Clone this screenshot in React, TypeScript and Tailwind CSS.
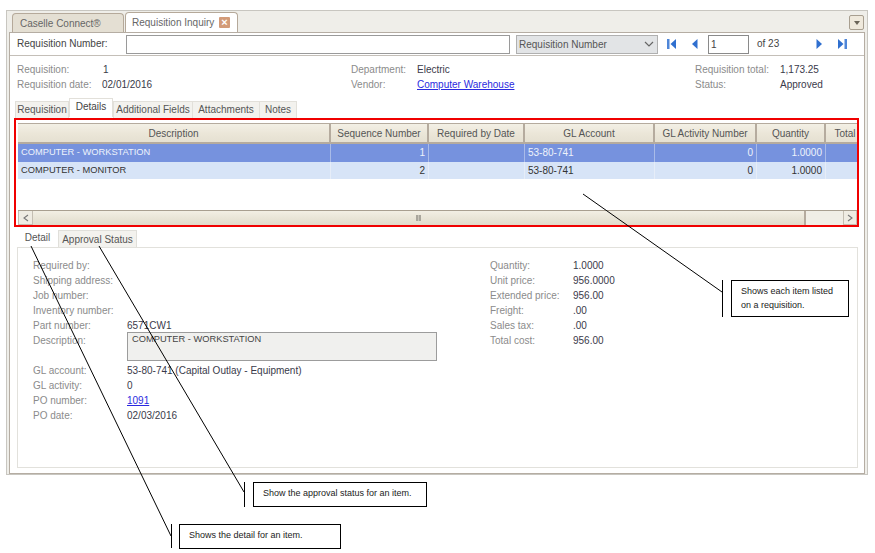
import React from 'react';

const columns = [
    { name: 'Description', w: 'w-[313px]' },
    { name: 'Sequence Number', w: 'w-[98px]' },
    { name: 'Required by Date', w: 'w-[96px]' },
    { name: 'GL Account', w: 'w-[130px]' },
    { name: 'GL Activity Number', w: 'w-[102px]' },
    { name: 'Quantity', w: 'w-[69px]' },
    { name: 'Total', w: 'w-[40px]' },
];

const rows = [
    { cells: ['COMPUTER - WORKSTATION', '1', '', '53-80-741', '0', '1.0000', ''], rowClass: 'bg-[#7692de] text-[#eef2fb]', h: 'h-[18px]', line: 'border-[#a9bbe8]' },
    { cells: ['COMPUTER - MONITOR', '2', '', '53-80-741', '0', '1.0000', ''], rowClass: 'bg-[#d7e4f7] text-[#333]', h: 'h-[17px]', line: 'border-[#e6edf8]' },
];

const rightAligned = [1, 4, 5];

const detailLeft: [string, React.ReactNode][] = [
    ['Required by:', ''],
    ['Shipping address:', ''],
    ['Job number:', ''],
    ['Inventory number:', ''],
    ['Part number:', '6571CW1'],
];

const detailLeftBottom: [string, React.ReactNode][] = [
    ['GL account:', '53-80-741 (Capital Outlay - Equipment)'],
    ['GL activity:', '0'],
    ['PO number:', <a className="text-[#2a2ae0] underline">1091</a>],
    ['PO date:', '02/03/2016'],
];

const detailRight = [
    ['Quantity:', '1.0000'],
    ['Unit price:', '956.0000'],
    ['Extended price:', '956.00'],
    ['Freight:', '.00'],
    ['Sales tax:', '.00'],
    ['Total cost:', '956.00'],
];

function NavIcon({ kind }: { kind: 'first' | 'prev' | 'next' | 'last' }) {
    return (
        <svg width="12" height="12" viewBox="0 0 12 12">
            {kind === 'first' && <rect x="1" y="1" width="2.5" height="10" fill="#4f86d8" />}
            {kind === 'last' && <rect x="8.5" y="1" width="2.5" height="10" fill="#4f86d8" />}
            {(kind === 'first' || kind === 'prev') && (
                <path d={kind === 'first' ? 'M10 1 L4.5 6 L10 11 Z' : 'M8.5 1 L3 6 L8.5 11 Z'} fill="#2f6fcf" />
            )}
            {(kind === 'next' || kind === 'last') && (
                <path d={kind === 'last' ? 'M2 1 L7.5 6 L2 11 Z' : 'M3.5 1 L9 6 L3.5 11 Z'} fill="#2f6fcf" />
            )}
        </svg>
    );
}

function Row({ label, value }: { label: string; value: React.ReactNode }) {
    return (
        <>
            <div className="h-[15px] leading-[15px] text-[#8b8b8b]">{label}</div>
            <div className="h-[15px] leading-[15px] text-[#3a3a4a]">{value}</div>
        </>
    );
}

export default function App() {
    return (
        <div className="relative h-[553px] w-[875px] overflow-hidden bg-white pl-[6px] pt-[10px] font-['Liberation_Sans',sans-serif] text-[10px] text-[#444]">
            {/* App frame */}
            <div className="flex h-[465px] w-[862px] flex-col border border-[#c8c6c0] bg-[#efeee9]">
                {/* Top tabs */}
                <div className="flex h-[21px] items-end pl-[5px] pr-[3px]">
                    <div className="flex h-[19px] w-[112px] items-center rounded-t-[4px] border border-b-0 border-[#b5a99a] bg-[#e4dfd3] pl-[7px] text-[#666]">
                        Caselle Connect®
                    </div>
                    <div className="ml-[1px] flex h-[20px] w-[113px] items-center whitespace-nowrap rounded-t-[4px] border border-b-0 border-[#b5a99a] bg-white pl-[6px] text-[#666]">
                        Requisition Inquiry
                        <span className="ml-auto mr-[7px] flex h-[11px] w-[11px] items-center justify-center rounded-[1px] bg-[#d39b78] text-[11px] leading-none font-bold text-white">×</span>
                    </div>
                    <div className="mb-[2px] ml-auto flex h-[15px] w-[15px] items-center justify-center rounded-[2px] border border-[#a89f90] bg-[#efe9dc]">
                        <div className="h-0 w-0 border-x-[3.5px] border-t-[4px] border-x-transparent border-t-[#6a6458]" />
                    </div>
                </div>

                {/* Main panel */}
                <div className="mx-[2px] flex min-h-0 flex-1 flex-col border border-[#b5ada3] bg-white">
                    {/* Search bar */}
                    <div className="flex h-[23px] shrink-0 items-center border-b border-[#c4bfb8] pl-[7px]">
                        <div className="w-[109px] pb-[1px] text-[#444]">Requisition Number:</div>
                        <div className="h-[19px] w-[384px] border border-[#9a9a9a] bg-white" />
                        <div className="ml-[6px] flex h-[19px] w-[142px] items-center justify-between border border-[#b0b0b0] bg-[#e2e4e6] pl-[2px] pr-[3px] text-[#555]">
                            Requisition Number
                            <svg width="10" height="6" viewBox="0 0 10 6">
                                <path d="M1 1 L5 5 L9 1" fill="none" stroke="#666" strokeWidth="1.2" />
                            </svg>
                        </div>
                        <div className="ml-[8px] flex w-[12px] justify-center"><NavIcon kind="first" /></div>
                        <div className="ml-[11px] flex w-[12px] justify-center"><NavIcon kind="prev" /></div>
                        <div className="ml-[7px] flex h-[19px] w-[41px] items-center border border-[#8a8a8a] pl-[2px]">1</div>
                        <div className="ml-[8px] w-[56px] pb-[1px]">of 23</div>
                        <NavIcon kind="next" />
                        <div className="ml-[11px]"><NavIcon kind="last" /></div>
                    </div>

                    {/* Summary */}
                    <div className="flex h-[43px] shrink-0 pl-[7px] pt-[6px]">
                        <div className="grid h-[30px] w-[334px] grid-cols-[85px_1fr]">
                            <Row label="Requisition:" value={<span className="pl-[1px]">1</span>} />
                            <Row label="Requisition date:" value="02/01/2016" />
                        </div>
                        <div className="grid h-[30px] w-[344px] grid-cols-[66px_1fr]">
                            <Row label="Department:" value="Electric" />
                            <Row label="Vendor:" value={<a className="text-[#2a2ae0] underline">Computer Warehouse</a>} />
                        </div>
                        <div className="grid h-[30px] grid-cols-[85px_1fr]">
                            <Row label="Requisition total:" value="1,173.25" />
                            <Row label="Status:" value="Approved" />
                        </div>
                    </div>

                    {/* Record tabs */}
                    <div className="flex h-[19px] shrink-0 items-end whitespace-nowrap pl-[5px] text-[#555]">
                        <div className="flex h-[17px] w-[54px] items-center justify-center border-x border-t border-[#e2e0da] bg-[#f3f2ee] pb-[1px]">Requisition</div>
                        <div className="mb-[1px] flex h-[19px] w-[44px] items-center justify-center border-x border-t border-[#e2e0da] bg-white pb-[3px] text-[#444]">Details</div>
                        <div className="flex h-[17px] w-[80px] items-center justify-center border-x border-t border-[#e2e0da] bg-[#f3f2ee] pb-[1px]">Additional Fields</div>
                        <div className="flex h-[17px] w-[67px] items-center justify-center border-r border-t border-[#e2e0da] bg-[#f3f2ee] pb-[1px]">Attachments</div>
                        <div className="flex h-[17px] w-[37px] items-center justify-center border-r border-t border-[#e2e0da] bg-[#f3f2ee] pb-[1px]">Notes</div>
                    </div>

                    {/* Highlighted grid */}
                    <div className="ml-[4px] h-[109px] w-[845px] shrink-0 overflow-hidden border-2 border-[#f00000] bg-white pl-[2px] pt-[3px]">
                        <div className="flex h-[21px] w-[1000px] bg-gradient-to-b from-[#f4f1e7] via-[#ebe6d8] to-[#e4dfd0]">
                            {columns.map((c) => (
                                <div key={c.name} className={`flex ${c.w} shrink-0 items-center justify-center border-b-2 border-r-2 border-t border-[#b5ab9e] text-[#555]`}>
                                    {c.name}
                                </div>
                            ))}
                        </div>
                        {rows.map((r) => (
                            <div key={r.cells[0]} className={`flex w-[1000px] ${r.h} ${r.rowClass}`}>
                                {r.cells.map((cell, i) => (
                                    <div
                                        key={i}
                                        className={`${columns[i].w} shrink-0 border-r ${r.line} px-[3px] leading-[17px] ${i === 0 ? 'text-[9.3px]' : ''} ${rightAligned.includes(i) ? 'text-right' : 'text-left'}`}
                                    >
                                        {cell}
                                    </div>
                                ))}
                            </div>
                        ))}
                        <div className="h-[31px]" />
                        {/* Scrollbar */}
                        <div className="flex h-[15px] w-[839px] items-stretch border-t border-[#a89f90] bg-[#f0eee6]">
                            <div className="flex w-[15px] items-center justify-center border border-t-0 border-[#c4beb2] bg-[#efece3]">
                                <svg width="6" height="8" viewBox="0 0 6 8"><path d="M5 1 L1 4 L5 7" fill="none" stroke="#777" strokeWidth="1.1" /></svg>
                            </div>
                            <div className="flex w-[773px] items-center justify-center border-r-2 border-[#b5ab9e] bg-gradient-to-b from-[#f2efe4] to-[#e0dbcb]">
                                <div className="h-[6px] w-[5px] border-x-2 border-[#a9a69c] bg-[#c8c5ba]" />
                            </div>
                            <div className="flex-1" />
                            <div className="flex w-[14px] items-center justify-center border border-t-0 border-[#c4beb2] bg-[#efece3]">
                                <svg width="6" height="8" viewBox="0 0 6 8"><path d="M1 1 L5 4 L1 7" fill="none" stroke="#777" strokeWidth="1.1" /></svg>
                            </div>
                        </div>
                    </div>

                    {/* Lower tabs */}
                    <div className="ml-[7px] flex h-[20px] shrink-0 items-end whitespace-nowrap">
                        <div className="flex h-[20px] w-[41px] items-center justify-center bg-white pt-[1px] text-[#555]">Detail</div>
                        <div className="flex h-[17px] w-[79px] items-center justify-center border-x border-t border-[#e0dfda] bg-[#f3f2ee] text-[#555]">Approval Status</div>
                    </div>

                    {/* Detail panel */}
                    <div className="mb-[5px] ml-[7px] flex min-h-0 w-[841px] flex-1 border border-[#e2e1dc] pl-[15px] pt-[10px]">
                        <div className="w-[457px] shrink-0">
                            <div className="grid grid-cols-[94px_1fr]">
                                {detailLeft.map(([l, v]) => (
                                    <Row key={l} label={l} value={v} />
                                ))}
                            </div>
                            <div className="flex h-[30px]">
                                <div className="w-[94px] leading-[15px] text-[#8b8b8b]">Description:</div>
                                <div className="-mt-[1px] h-[29px] w-[310px] border border-[#9c9c9c] bg-[#f0f0ee] pl-[4px] text-[9.3px] leading-[13px] text-[#444]">COMPUTER - WORKSTATION</div>
                            </div>
                            <div className="grid grid-cols-[94px_1fr]">
                                {detailLeftBottom.map(([l, v]) => (
                                    <Row key={l} label={l} value={v} />
                                ))}
                            </div>
                        </div>
                        <div className="grid h-[90px] grid-cols-[83px_1fr]">
                            {detailRight.map(([l, v]) => (
                                <Row key={l} label={l} value={v} />
                            ))}
                        </div>
                    </div>
                </div>
            </div>

            {/* Callout leader lines */}
            <svg className="absolute left-0 top-0" width="875" height="553">
                <g stroke="#000" strokeWidth="1" fill="none">
                    <path d="M583 194 L722 292" />
                    <path d="M722.5 280 V317" />
                    <path d="M99 246 L244 492" />
                    <path d="M244.5 482 V507" />
                    <path d="M31 246 L171 536" />
                    <path d="M171.5 524 V548" />
                </g>
            </svg>

            {/* Callouts */}
            <div className="absolute left-[731px] top-[280px] h-[37px] w-[118px] border border-black bg-white pl-[9px] pt-[3px] font-['Liberation_Sans',sans-serif] text-[9px] leading-[14px] text-[#222]">
                Shows each item listed
                <br />
                on a requisition.
            </div>
            <div className="absolute left-[253px] top-[482px] h-[25px] w-[174px] border border-black bg-white pl-[9px] pt-[3px] font-['Liberation_Sans',sans-serif] text-[9px] leading-[14px] text-[#222]">
                Show the approval status for an item.
            </div>
            <div className="absolute left-[179px] top-[524px] h-[25px] w-[162px] border border-black bg-white pl-[9px] pt-[3px] font-['Liberation_Sans',sans-serif] text-[9px] leading-[14px] text-[#222]">
                Shows the detail for an item.
            </div>
        </div>
    );
}
